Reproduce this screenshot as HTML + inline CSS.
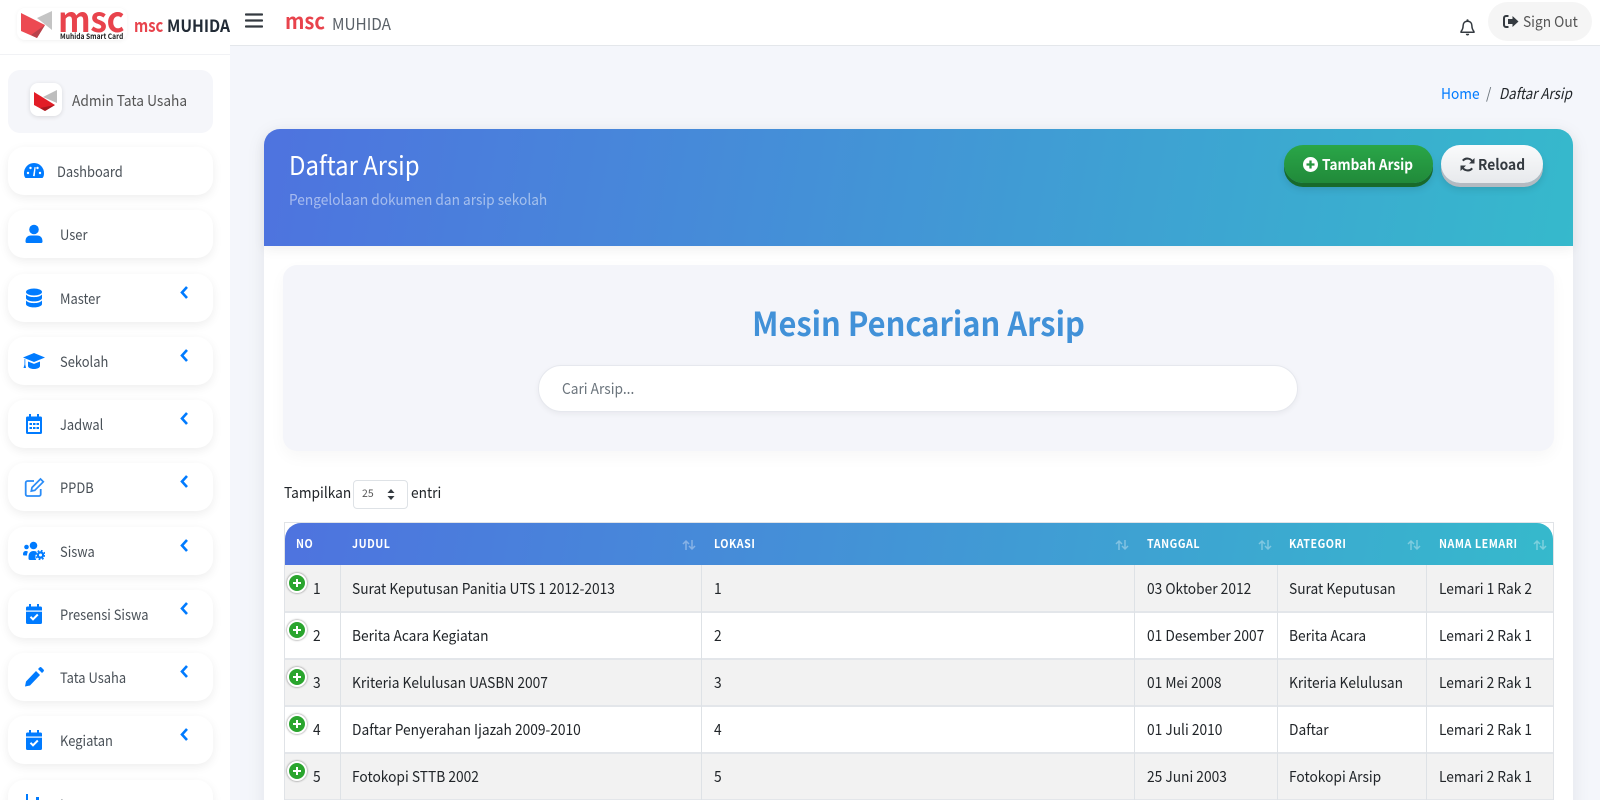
<!DOCTYPE html>
<html lang="id"><head><meta charset="utf-8"><title>Daftar Arsip</title>
<style>
*{box-sizing:border-box;margin:0;padding:0}
html,body{width:1600px;height:800px;overflow:hidden;background:#f4f6fb}
body{position:relative;font-family:"Noto Sans CJK SC","Liberation Sans",sans-serif;color:#212529;font-size:15px}
.a{position:absolute;white-space:nowrap}
.t{position:absolute;white-space:nowrap;line-height:20px;transform:scaleX(.915);transform-origin:0 50%}
#side{position:absolute;left:0;top:0;width:230px;height:800px;background:#fff}
.nav{position:absolute;left:8px;width:205px;height:48px;background:#fff;border-radius:16px;box-shadow:0 3px 10px rgba(0,0,0,.07)}
.nav span{position:absolute;left:52px;top:15px;line-height:20px;font-size:14.5px;color:#495057;white-space:nowrap;transform:scaleX(.89);transform-origin:0 50%}
.nav svg{position:absolute;fill:#007bff}
.nav svg.i{left:15px;top:14px;width:22px;height:20px}
.nav svg.c{left:172px;top:12px;width:9px;height:13px}
.th{position:absolute;top:524px;height:42px;line-height:20px;padding-top:10px;color:#fff;font-weight:700;font-size:12px;letter-spacing:.6px;white-space:nowrap;transform:scaleX(.89);transform-origin:0 50%}
.sort{position:absolute;top:539px;width:14px;height:12px;opacity:.35}
.row{position:absolute;left:285px;width:1268px;height:47px;border-bottom:2px solid #e3e6ea}
.cell{position:absolute;line-height:20px;font-size:15px;white-space:nowrap;color:#212529;transform:scaleX(.917);transform-origin:0 50%}
.vl{position:absolute;top:565px;width:1px;height:235px;background:#dee2e6}
.plus{position:absolute;left:287px;width:20px;height:20px;border-radius:50%;background:#2aa52e;border:2px solid #fff;box-shadow:0 0 2px rgba(0,0,0,.55)}
.plus:before{content:"";position:absolute;left:4px;top:7px;width:8px;height:2px;background:#fff}
.plus:after{content:"";position:absolute;left:7px;top:4px;width:2px;height:8px;background:#fff}
</style></head><body>

<div id="side">
<div class="a" style="left:0;top:54px;width:230px;height:1px;background:#f1f2f5"></div>
<div class="a" style="left:17px;top:8px;width:110px;height:32px;background:#fff;border-radius:8px;box-shadow:0 1px 4px rgba(0,0,0,.06)"></div>
<svg class="a" style="left:20px;top:10px" width="34" height="30" viewBox="0 0 34 30"><polygon points="1,3 25,15 17,28 1,21" fill="#ec4a52"/><polygon points="25,15 17,28 11,25" fill="#b8434c"/><polygon points="17,8 32,1 32,20" fill="#c4c4c4"/></svg>
<div class="t" style="left:58px;top:3px;font-size:35px;line-height:30px;font-weight:700;color:#e8434c;letter-spacing:-.5px;transform:scaleX(.97)">msc</div>
<div class="t" style="left:60px;top:32px;font-size:7.5px;line-height:9px;font-weight:700;color:#222;transform:scaleX(.89)">Muhida Smart Card</div>
<div class="t" style="left:134px;top:15px;font-size:18px;font-weight:700;color:#e8434c;transform:scaleX(.82)">msc</div>
<div class="t" style="left:167px;top:15px;font-size:17px;font-weight:700;color:#222b36;transform:scaleX(.92)">MUHIDA</div>

<div class="a" style="left:8px;top:70px;width:205px;height:63px;background:#f5f6fa;border-radius:12px"></div>
<div class="a" style="left:30px;top:83px;width:32px;height:33px;background:#fff;border-radius:8px;box-shadow:0 1px 5px rgba(0,0,0,.12)"></div>
<svg class="a" style="left:33px;top:89px" width="26" height="24" viewBox="0 0 26 24"><polygon points="1,3 22,16 12,22 1,16" fill="#e21d26"/><polygon points="22,16 12,22 7,19" fill="#a8181f"/><polygon points="10,8 24,1 24,14" fill="#bdbdbd"/></svg>
<div class="t" style="left:72px;top:91px;font-size:15px;color:#555">Admin Tata Usaha</div>

<div class="nav" style="top:147px"><svg class="i" viewBox="0 0 22 20"><path d="M11 2a10 10 0 0 0-10 10.500c0 2 .5 3.500 1.500 4.500h17c1-1 1.500-2.500 1.500-4.500A10 10 0 0 0 11 2z"/><g fill="#fff"><circle cx="5" cy="12" r="1.200"/><circle cx="7.500" cy="7" r="1.200"/><circle cx="17" cy="12" r="1.200"/><circle cx="14.500" cy="7" r="1.200"/><path d="M10 15l1.500-9 1.200.3-1 9z"/></g></svg><span style="left:49px">Dashboard</span></div>
<div class="nav" style="top:210.250px"><svg class="i" viewBox="0 0 22 20"><circle cx="11" cy="5.500" r="4.800"/><path d="M3.500 19a1.500 1.500 0 0 1-1-1.500C2.500 13 5 11.500 8 11.500h6c3 0 5.500 1.500 5.500 6a1.500 1.500 0 0 1-1 1.500z"/></svg><span>User</span></div>
<div class="nav" style="top:273.500px"><svg class="i" viewBox="0 0 22 20"><ellipse cx="11" cy="4" rx="8" ry="3.500"/><path d="M3 6.500c1.500 1.800 4.500 2.600 8 2.600s6.500-.8 8-2.600V10c0 1.900-3.600 3.400-8 3.400S3 11.900 3 10z"/><path d="M3 12.500c1.500 1.800 4.500 2.600 8 2.600s6.500-.8 8-2.600V16c0 1.900-3.600 3.400-8 3.400S3 17.900 3 16z"/></svg><span>Master</span><svg class="c" viewBox="0 0 9 13"><path d="M7 1L2 6.500 7 12" fill="none" stroke="#007bff" stroke-width="2.600"/></svg></div>
<div class="nav" style="top:336.750px"><svg class="i" viewBox="0 0 22 20"><path d="M11 2L22 6.500 11 11 0 6.500z"/><path d="M5 10.500l6 2.400 6-2.400V15c0 1.700-2.700 3-6 3s-6-1.300-6-3z"/><path d="M1.500 8v5.500L.5 17h2.500l-.7-3.500V8.300z"/></svg><span>Sekolah</span><svg class="c" viewBox="0 0 9 13"><path d="M7 1L2 6.500 7 12" fill="none" stroke="#007bff" stroke-width="2.600"/></svg></div>
<div class="nav" style="top:400px"><svg class="i" viewBox="0 0 22 20"><path d="M6 0h2v2.500h6V0h2v2.500h1.500A1.500 1.500 0 0 1 19 4v14.500a1.500 1.500 0 0 1-1.500 1.500h-13A1.500 1.500 0 0 1 3 18.500V4a1.500 1.500 0 0 1 1.500-1.500H6z"/><path fill="#fff" d="M5 7h12v11H5z"/><path d="M6.500 9h2.500v2H6.500zM10 9h2.500v2H10zM13.500 9H16v2h-2.500zM6.500 13h2.500v2H6.500zM10 13h2.500v2H10zM13.500 13H16v2h-2.500z"/></svg><span>Jadwal</span><svg class="c" viewBox="0 0 9 13"><path d="M7 1L2 6.500 7 12" fill="none" stroke="#007bff" stroke-width="2.600"/></svg></div>
<div class="nav" style="top:463.250px"><svg class="i" viewBox="0 0 22 20"><path d="M11 4H4.500A1.800 1.800 0 0 0 2.700 5.800v11.400A1.800 1.800 0 0 0 4.500 19h11.400a1.800 1.800 0 0 0 1.800-1.800V12" fill="none" stroke="#2a8cf7" stroke-width="1.800"/><path d="M9 10.500L17.500 2l2.800 2.800-8.500 8.500-3.500.7z" fill="none" stroke="#2a8cf7" stroke-width="1.700"/></svg><span>PPDB</span><svg class="c" viewBox="0 0 9 13"><path d="M7 1L2 6.500 7 12" fill="none" stroke="#007bff" stroke-width="2.600"/></svg></div>
<div class="nav" style="top:526.500px"><svg class="i" viewBox="0 0 22 20"><circle cx="3.500" cy="6" r="2.300"/><circle cx="10.500" cy="4.500" r="3.800"/><path d="M0 13.500c0-2.200 1-3.500 2.800-3.500 1 0 1.800.3 2.200.8-.7 1-1 2.300-1 3.700H1a1 1 0 0 1-1-1z"/><path d="M5.500 16c0-4 2-6 5-6 1.500 0 2.600.4 3.400 1.100-1.600 1.900-2 5.200-.7 7.900H7a1.500 1.500 0 0 1-1.500-1.500z"/><circle cx="17.500" cy="14" r="3.700"/><circle cx="17.500" cy="14" r="4.400" fill="none" stroke="#007bff" stroke-width="1.500" stroke-dasharray="1.800 1.700"/><circle cx="17.500" cy="14" r="1.500" fill="#fff"/></svg><span>Siswa</span><svg class="c" viewBox="0 0 9 13"><path d="M7 1L2 6.500 7 12" fill="none" stroke="#007bff" stroke-width="2.600"/></svg></div>
<div class="nav" style="top:589.750px"><svg class="i" viewBox="0 0 22 20"><path d="M6 0h2v2.500h6V0h2v2.500h1.500A1.500 1.500 0 0 1 19 4v14.500a1.500 1.500 0 0 1-1.500 1.500h-13A1.500 1.500 0 0 1 3 18.500V4a1.500 1.500 0 0 1 1.500-1.500H6z"/><path fill="#fff" d="M3 6.500h16v1.200H3z"/><path d="M7.500 12.800l2.500 2.500 4.800-4.800" fill="none" stroke="#fff" stroke-width="2"/></svg><span>Presensi Siswa</span><svg class="c" viewBox="0 0 9 13"><path d="M7 1L2 6.500 7 12" fill="none" stroke="#007bff" stroke-width="2.600"/></svg></div>
<div class="nav" style="top:653px"><svg class="i" viewBox="0 0 22 20"><path d="M13 4l4 4L7 18.500l-5 1 1-5zM15 2l1.500-1.500a1.500 1.500 0 0 1 2 0l2 2a1.500 1.500 0 0 1 0 2L19 6z"/></svg><span>Tata Usaha</span><svg class="c" viewBox="0 0 9 13"><path d="M7 1L2 6.500 7 12" fill="none" stroke="#007bff" stroke-width="2.600"/></svg></div>
<div class="nav" style="top:716.250px"><svg class="i" viewBox="0 0 22 20"><path d="M6 0h2v2.500h6V0h2v2.500h1.500A1.500 1.500 0 0 1 19 4v14.500a1.500 1.500 0 0 1-1.500 1.500h-13A1.500 1.500 0 0 1 3 18.500V4a1.500 1.500 0 0 1 1.500-1.500H6z"/><path fill="#fff" d="M3 6.500h16v1.200H3z"/><path d="M7.500 12.800l2.500 2.500 4.800-4.800" fill="none" stroke="#fff" stroke-width="2"/></svg><span>Kegiatan</span><svg class="c" viewBox="0 0 9 13"><path d="M7 1L2 6.500 7 12" fill="none" stroke="#007bff" stroke-width="2.600"/></svg></div>
<div class="nav" style="top:779.500px"><svg class="i" viewBox="0 0 22 20"><path d="M3 0h2v16h16v2H3zM8 8h3v7H8zM13 3h3v12h-3z"/></svg><span>Laporan</span></div>
</div>

<div class="a" style="left:230px;top:0;width:1370px;height:46px;background:#fff;border-bottom:1px solid #e4e7eb"></div>
<svg class="a" style="left:245px;top:13px" width="18" height="15" viewBox="0 0 18 15"><path d="M1 1.500h16M1 7.500h16M1 13.500h16" stroke="#343a40" stroke-width="2.300" stroke-linecap="round"/></svg>
<div class="t" style="left:285px;top:11px;font-size:21px;font-weight:700;color:#e8434c;transform:scaleX(.96)">msc</div>
<div class="t" style="left:332px;top:13px;font-size:16px;color:#5a6168;transform:scaleX(.96)">MUHIDA</div>
<svg class="a" style="left:1460px;top:19px" width="15" height="17" viewBox="0 0 15 17"><path d="M7.500 2.200c-2.800 0-4.400 2-4.400 4.600 0 3.200-1.100 4.600-2 5.600v.8h12.800v-.8c-.9-1-2-2.400-2-5.600 0-2.600-1.600-4.600-4.400-4.600z" fill="none" stroke="#343a40" stroke-width="1.500"/><circle cx="7.500" cy="1.300" r="1.100" fill="#343a40"/><path d="M5.800 14.800a1.700 1.700 0 0 0 3.400 0z" fill="#343a40"/></svg>
<div class="a" style="left:1488px;top:2px;width:104px;height:39px;background:#f5f5f5;border-radius:20px"></div>
<svg class="a" style="left:1503px;top:15px" width="16" height="13" viewBox="0 0 16 13"><path d="M5.500 1H3a2 2 0 0 0-2 2v7a2 2 0 0 0 2 2h2.500" fill="none" stroke="#343a40" stroke-width="2"/><path d="M9.500 1L15.500 6.500 9.500 12V9H5V4h4.500z" fill="#343a40"/></svg>
<div class="t" style="left:1523px;top:12px;font-size:15px;color:#555">Sign Out</div>

<div class="t" style="left:1441px;top:84px;font-size:15px;color:#007bff">Home</div>
<div class="t" style="left:1486px;top:84px;font-size:15px;color:#6c757d">/</div>
<div class="t" style="left:1498.500px;top:84px;font-size:15px;font-style:italic;color:#212529;transform:scaleX(.89)">Daftar Arsip</div>

<div class="a" style="left:264px;top:129px;width:1309px;height:700px;background:#fff;border-radius:16px;box-shadow:0 4px 20px rgba(0,0,0,.07)"></div>
<div class="a" style="left:264px;top:129px;width:1309px;height:117px;border-radius:16px 16px 0 0;background:linear-gradient(100deg,#4e73df,#36b9cc);box-shadow:0 4px 12px rgba(0,0,0,.06)"></div>
<div class="t" style="left:289px;top:150px;font-size:26px;line-height:30px;color:#fff;transform:scaleX(.92)">Daftar Arsip</div>
<div class="t" style="left:289px;top:190px;font-size:15px;color:rgba(255,255,255,.5);transform:scaleX(.913)">Pengelolaan dokumen dan arsip sekolah</div>

<div class="a" style="left:1284px;top:145px;width:149px;height:38px;border-radius:19px;background:linear-gradient(180deg,#2aa648,#218a3a);box-shadow:0 4px 0 #186a2b,0 6px 8px rgba(0,0,0,.12)"></div>
<svg class="a" style="left:1303px;top:157px" width="15" height="15" viewBox="0 0 15 15"><circle cx="7.500" cy="7.500" r="7.500" fill="#fff"/><path d="M3.500 7.500h8M7.500 3.500v8" stroke="#25963f" stroke-width="2.300"/></svg>
<div class="t" style="left:1322px;top:155px;font-size:15px;font-weight:700;color:#fff;transform:scaleX(.905)">Tambah Arsip</div>
<div class="a" style="left:1441px;top:145px;width:102px;height:38px;border-radius:19px;background:linear-gradient(180deg,#fafbfc,#e7e9ec);box-shadow:0 4px 0 #b4bac1,0 6px 8px rgba(0,0,0,.12)"></div>
<svg class="a" style="left:1460px;top:157px" width="15" height="15" viewBox="0 0 15 15"><path d="M13 5.500A6 6 0 0 0 2.800 3.700M2 9.500a6 6 0 0 0 10.200 1.800" fill="none" stroke="#343a40" stroke-width="2"/><path d="M14.500 1v5.500H9zM.5 14V8.500H6z" fill="#343a40"/></svg>
<div class="t" style="left:1478px;top:155px;font-size:15px;font-weight:700;color:#343a40;transform:scaleX(.92)">Reload</div>

<div class="a" style="left:283px;top:265px;width:1271px;height:186px;border-radius:14px;background:#f4f5fa;box-shadow:0 6px 16px rgba(0,0,0,.035)"></div>
<div class="a" style="left:283px;top:302px;width:1271px;text-align:center;font-size:33px;line-height:40px;font-weight:700;color:#4191d8;transform:scaleX(.935);transform-origin:50% 50%">Mesin Pencarian Arsip</div>
<div class="a" style="left:538px;top:365px;width:760px;height:47px;border-radius:24px;background:#fff;border:1px solid #e6e8ee;box-shadow:0 2px 6px rgba(0,0,0,.05)"></div>
<div class="t" style="left:562px;top:379px;font-size:15px;color:#6c757d">Cari Arsip...</div>

<div class="t" style="left:284px;top:483px;font-size:15px">Tampilkan</div>
<div class="a" style="left:353px;top:480px;width:55px;height:29px;border:1px solid #dee2e6;border-radius:4px;background:#fff"></div>
<div class="t" style="left:362px;top:484px;font-size:10.500px;color:#555;transform:none">25</div>
<svg class="a" style="left:387px;top:489px" width="8" height="11" viewBox="0 0 8 11"><path d="M4 0l3.500 4H.5zM4 11L.5 7h7z" fill="#343a40"/></svg>
<div class="t" style="left:411px;top:483px;font-size:15px">entri</div>

<div class="a" style="left:284px;top:522px;width:1270px;height:278px;border:1px solid #e0e3e7;border-bottom:0"></div>
<div class="a" style="left:285px;top:523px;width:1268px;height:42px;border-radius:16px 16px 0 0;background:linear-gradient(100deg,#4e73df,#36b9cc)"></div>
<div class="th" style="left:296px">NO</div><div class="th" style="left:352px">JUDUL</div><div class="th" style="left:714px">LOKASI</div><div class="th" style="left:1147px">TANGGAL</div><div class="th" style="left:1289px">KATEGORI</div><div class="th" style="left:1439px">NAMA LEMARI</div>
<svg class="sort" style="left:682px" viewBox="0 0 14 12"><path d="M4 11V2M1 5l3-3 3 3M10 1v9M7 7l3 3 3-3" fill="none" stroke="#fff" stroke-width="1.500"/></svg>
<svg class="sort" style="left:1115px" viewBox="0 0 14 12"><path d="M4 11V2M1 5l3-3 3 3M10 1v9M7 7l3 3 3-3" fill="none" stroke="#fff" stroke-width="1.500"/></svg>
<svg class="sort" style="left:1258px" viewBox="0 0 14 12"><path d="M4 11V2M1 5l3-3 3 3M10 1v9M7 7l3 3 3-3" fill="none" stroke="#fff" stroke-width="1.500"/></svg>
<svg class="sort" style="left:1407px" viewBox="0 0 14 12"><path d="M4 11V2M1 5l3-3 3 3M10 1v9M7 7l3 3 3-3" fill="none" stroke="#fff" stroke-width="1.500"/></svg>
<svg class="sort" style="left:1533px" viewBox="0 0 14 12"><path d="M4 11V2M1 5l3-3 3 3M10 1v9M7 7l3 3 3-3" fill="none" stroke="#fff" stroke-width="1.500"/></svg>

<div class="row" style="top:565px;height:48px;background:#f2f2f2"></div>
<div class="row" style="top:613px;background:#fff"></div>
<div class="row" style="top:660px;background:#f2f2f2"></div>
<div class="row" style="top:707px;background:#fff"></div>
<div class="row" style="top:754px;background:#f2f2f2"></div>
<div class="vl" style="left:340px"></div><div class="vl" style="left:701px"></div><div class="vl" style="left:1134px"></div><div class="vl" style="left:1277px"></div><div class="vl" style="left:1426px"></div>

<div class="plus" style="top:573px"></div><div class="plus" style="top:620px"></div><div class="plus" style="top:667px"></div><div class="plus" style="top:714px"></div><div class="plus" style="top:761px"></div>

<div class="cell" style="left:313px;top:579px">1</div><div class="cell" style="left:352px;top:579px">Surat Keputusan Panitia UTS 1 2012-2013</div><div class="cell" style="left:714px;top:579px">1</div><div class="cell" style="left:1147px;top:579px">03 Oktober 2012</div><div class="cell" style="left:1289px;top:579px">Surat Keputusan</div><div class="cell" style="left:1439px;top:579px">Lemari 1 Rak 2</div>
<div class="cell" style="left:313px;top:626px">2</div><div class="cell" style="left:352px;top:626px">Berita Acara Kegiatan</div><div class="cell" style="left:714px;top:626px">2</div><div class="cell" style="left:1147px;top:626px">01 Desember 2007</div><div class="cell" style="left:1289px;top:626px">Berita Acara</div><div class="cell" style="left:1439px;top:626px">Lemari 2 Rak 1</div>
<div class="cell" style="left:313px;top:673px">3</div><div class="cell" style="left:352px;top:673px">Kriteria Kelulusan UASBN 2007</div><div class="cell" style="left:714px;top:673px">3</div><div class="cell" style="left:1147px;top:673px">01 Mei 2008</div><div class="cell" style="left:1289px;top:673px">Kriteria Kelulusan</div><div class="cell" style="left:1439px;top:673px">Lemari 2 Rak 1</div>
<div class="cell" style="left:313px;top:720px">4</div><div class="cell" style="left:352px;top:720px">Daftar Penyerahan Ijazah 2009-2010</div><div class="cell" style="left:714px;top:720px">4</div><div class="cell" style="left:1147px;top:720px">01 Juli 2010</div><div class="cell" style="left:1289px;top:720px">Daftar</div><div class="cell" style="left:1439px;top:720px">Lemari 2 Rak 1</div>
<div class="cell" style="left:313px;top:767px">5</div><div class="cell" style="left:352px;top:767px">Fotokopi STTB 2002</div><div class="cell" style="left:714px;top:767px">5</div><div class="cell" style="left:1147px;top:767px">25 Juni 2003</div><div class="cell" style="left:1289px;top:767px">Fotokopi Arsip</div><div class="cell" style="left:1439px;top:767px">Lemari 2 Rak 1</div>
</body></html>
